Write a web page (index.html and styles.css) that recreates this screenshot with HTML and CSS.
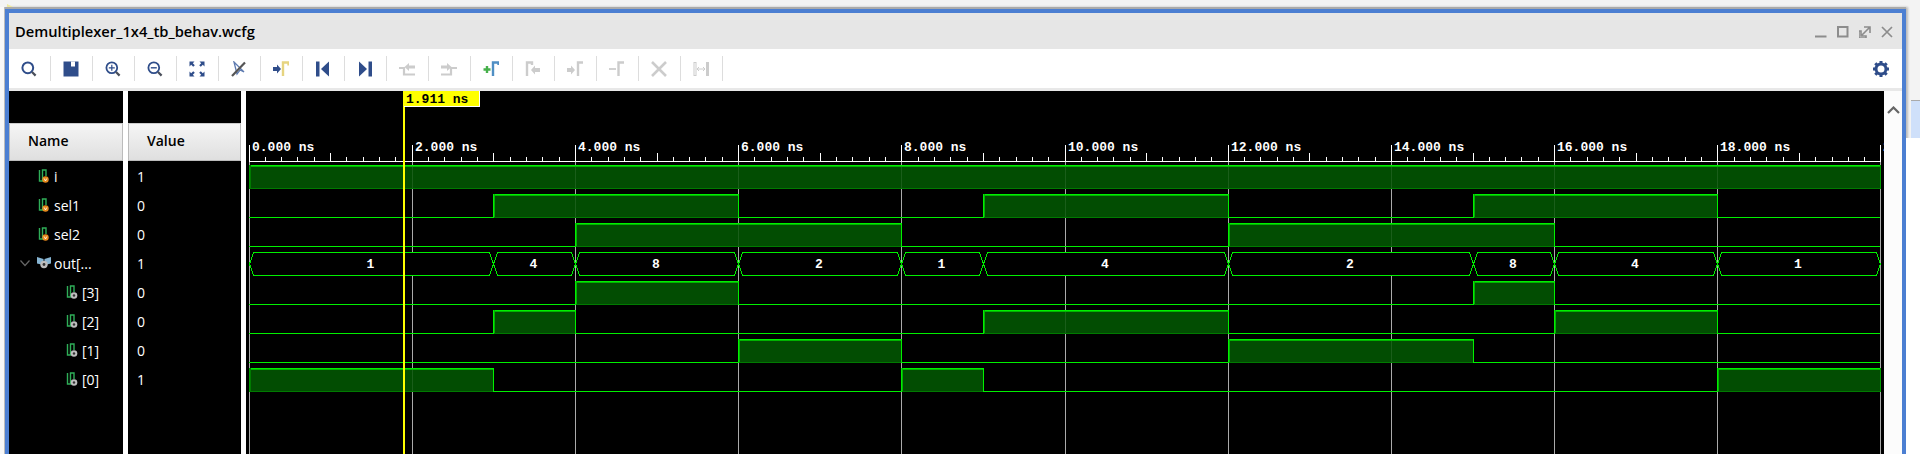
FILE: index.html
```html
<!DOCTYPE html>
<html lang="en">
<head>
	<meta charset="UTF-8">
	<title>Demultiplexer_1x4_tb_behav.wcfg</title>
	<link rel="stylesheet" href="styles.css">
</head>
<body>
	<div class="page">
		<div class="corner"></div>
		<div class="left-strip"></div>
		<div class="window">
			<div class="titlebar">
				<span class="title">Demultiplexer_1x4_tb_behav.wcfg</span>
				<div class="winbtns">
					<svg width="12" height="12" viewBox="0 0 12 12"><path d="M0 10.5h11.5" stroke="#8c8c8c" stroke-width="2"/></svg>
					<svg width="12" height="12" viewBox="0 0 12 12"><rect x="1" y="1" width="9.5" height="9.5" fill="none" stroke="#8c8c8c" stroke-width="2"/></svg>
					<svg width="12" height="12" viewBox="0 0 12 12"><path d="M5 1h6v6M11 1L6 6M0 5h2v5h5v2H0zM3 9l3-3" fill="none" stroke="#8c8c8c" stroke-width="1.6"/></svg>
					<svg width="12" height="12" viewBox="0 0 12 12"><path d="M1 1l10 10M11 1L1 11" stroke="#8c8c8c" stroke-width="1.7"/></svg>
				</div>
			</div>
			<div class="toolbar">
				<!-- search -->
				<div class="tool"><svg width="16" height="16" viewBox="0 0 16 16"><circle cx="6.8" cy="6.8" r="5.4" fill="none" stroke="#2f4d8a" stroke-width="2"/><path d="M11 11l3.6 3.6" stroke="#4a4f5a" stroke-width="2.2"/></svg></div>
				<!-- save -->
				<div class="tool"><svg width="16" height="16" viewBox="0 0 16 16"><path d="M0.5 0.5h15v15h-15z" fill="#2f4d8a"/><path d="M8 0.5h4v5h-4z" fill="#fff"/></svg></div>
				<!-- zoom in -->
				<div class="tool"><svg width="16" height="16" viewBox="0 0 16 16"><circle cx="6.8" cy="6.8" r="5.4" fill="none" stroke="#2f4d8a" stroke-width="1.8"/><path d="M6.8 3.8v6M3.8 6.8h6" stroke="#2f4d8a" stroke-width="1.2"/><path d="M11 11l3.6 3.6" stroke="#4a4f5a" stroke-width="2.2"/></svg></div>
				<!-- zoom out -->
				<div class="tool"><svg width="16" height="16" viewBox="0 0 16 16"><circle cx="6.8" cy="6.8" r="5.4" fill="none" stroke="#2f4d8a" stroke-width="1.8"/><path d="M3.8 6.8h6" stroke="#2f4d8a" stroke-width="1.4"/><path d="M11 11l3.6 3.6" stroke="#4a4f5a" stroke-width="2.2"/></svg></div>
				<!-- fit -->
				<div class="tool"><svg width="16" height="16" viewBox="0 0 16 16"><path d="M0.5 0.5h5l-1.7 1.7 2 2-1.6 1.6-2-2-1.7 1.7zM15.5 0.5h-5l1.7 1.7-2 2 1.6 1.6 2-2 1.7 1.7zM0.5 15.5h5l-1.7-1.7 2-2-1.6-1.6-2 2-1.7-1.7zM15.5 15.5h-5l1.7-1.7-2-2 1.6-1.6 2 2 1.7-1.7z" fill="#2f4d8a"/></svg></div>
				<!-- cursor off -->
				<div class="tool"><svg width="16" height="16" viewBox="0 0 16 16"><path d="M3 1l3 12 3-4 4 2z" fill="#fff" stroke="#5e7bb0" stroke-width="1.3"/><path d="M1 15L14 1.5" stroke="#555" stroke-width="2.2"/></svg></div>
				<!-- go to cursor -->
				<div class="tool"><svg width="16" height="16" viewBox="0 0 16 16"><path d="M0 6h4V3.5L8 8l-4 4.5V10H0z" fill="#2f4d8a"/><path d="M10 15V1.5h5.5v3" fill="none" stroke="#e6d480" stroke-width="2.4"/></svg></div>
				<!-- go to start -->
				<div class="tool"><svg width="16" height="16" viewBox="0 0 16 16"><path d="M1 0.5h3.5v15H1z" fill="#2f4d8a"/><path d="M14 0.5v15L6 8z" fill="#2f4d8a"/></svg></div>
				<!-- go to end -->
				<div class="tool"><svg width="16" height="16" viewBox="0 0 16 16"><path d="M11.5 0.5H15v15h-3.5z" fill="#2f4d8a"/><path d="M2 0.5v15L10 8z" fill="#2f4d8a"/></svg></div>
				<!-- previous transition -->
				<div class="tool"><svg width="16" height="16" viewBox="0 0 16 16"><path d="M0 7h5v6.5h11" fill="none" stroke="#ccc" stroke-width="2.2"/><path d="M16 4.5h-6V2L5.5 6 10 10V7.5h6z" fill="#ccc"/></svg></div>
				<!-- next transition -->
				<div class="tool"><svg width="16" height="16" viewBox="0 0 16 16"><path d="M0 4.5h6V2l4.5 4L6 10V7.5H0z" fill="#ccc"/><path d="M0 13.5h10V7h6" fill="none" stroke="#ccc" stroke-width="2.2"/></svg></div>
				<!-- add marker -->
				<div class="tool"><svg width="16" height="16" viewBox="0 0 16 16"><path d="M4 5v7M0.5 8.5h7" stroke="#46b04a" stroke-width="2.4"/><path d="M10 15V1.5h5.5v2.5" fill="none" stroke="#4f8fc4" stroke-width="2.4"/></svg></div>
				<!-- previous marker -->
				<div class="tool"><svg width="16" height="16" viewBox="0 0 16 16"><path d="M2 15V1.5h5v2.5" fill="none" stroke="#ccc" stroke-width="2.4"/><path d="M15 7H10V4.5L6 9l4 4.5V11h5z" fill="#ccc"/></svg></div>
				<!-- next marker -->
				<div class="tool"><svg width="16" height="16" viewBox="0 0 16 16"><path d="M0 7h4V4.5L8 9l-4 4.5V11H0z" fill="#ccc"/><path d="M11 15V1.5h5" fill="none" stroke="#ccc" stroke-width="2.4"/></svg></div>
				<!-- delete marker line -->
				<div class="tool"><svg width="16" height="16" viewBox="0 0 16 16"><path d="M0 8h7" stroke="#ccc" stroke-width="1.8"/><path d="M9.5 15V1.5H15" fill="none" stroke="#ccc" stroke-width="2.4"/></svg></div>
				<!-- delete all -->
				<div class="tool"><svg width="16" height="16" viewBox="0 0 16 16"><path d="M1 1l14 14M15 1L1 15" stroke="#ccc" stroke-width="2.6"/></svg></div>
				<!-- measure -->
				<div class="tool"><svg width="16" height="16" viewBox="0 0 16 16"><rect x="1" y="1.5" width="2" height="13" fill="#fff" stroke="#ccc"/><rect x="13" y="1" width="3" height="14" fill="#ccc"/><path d="M4 8h8M4 8l2-2M4 8l2 2M12 8l-2-2M12 8l-2 2" fill="none" stroke="#ccc"/></svg></div>
				<div class="tool-fill"></div>
				<!-- settings -->
				<svg class="gear" width="16" height="16" viewBox="0 0 16 16"><circle cx="8" cy="8" r="5" fill="none" stroke="#2f4d8a" stroke-width="3"/><path d="M8 0v3M8 13v3M0 8h3M13 8h3M2.3 2.3l2.1 2.1M11.6 11.6l2.1 2.1M13.7 2.3l-2.1 2.1M4.4 11.6l-2.1 2.1" stroke="#2f4d8a" stroke-width="3"/></svg>
			</div>
			<div class="toolbar-edge"></div>
			<div class="main">
				<div class="col col-name">
					<div class="col-top"></div>
					<div class="col-head">Name</div>
					<div class="row"><svg class="sig" width="14" height="15" viewBox="0 0 14 15"><path d="M1.5 1v11h3V1H8v6" fill="none" stroke="#2fae58" stroke-width="1.4"/><circle cx="7.5" cy="10.5" r="3.2" fill="#e8891c"/><path d="M6.2 9.5l1.3 2.5 1.3-2.5" fill="none" stroke="#fff" stroke-width=".8"/></svg><span>i</span></div>
					<div class="row"><svg class="sig" width="14" height="15" viewBox="0 0 14 15"><path d="M1.5 1v11h3V1H8v6" fill="none" stroke="#2fae58" stroke-width="1.4"/><circle cx="7.5" cy="10.5" r="3.2" fill="#e8891c"/><path d="M6.2 9.5l1.3 2.5 1.3-2.5" fill="none" stroke="#fff" stroke-width=".8"/></svg><span>sel1</span></div>
					<div class="row"><svg class="sig" width="14" height="15" viewBox="0 0 14 15"><path d="M1.5 1v11h3V1H8v6" fill="none" stroke="#2fae58" stroke-width="1.4"/><circle cx="7.5" cy="10.5" r="3.2" fill="#e8891c"/><path d="M6.2 9.5l1.3 2.5 1.3-2.5" fill="none" stroke="#fff" stroke-width=".8"/></svg><span>sel2</span></div>
					<div class="row row-group">
						<svg class="chev" width="10" height="7" viewBox="0 0 10 7"><path d="M0.5 0.5L5 5.5l4.5-5" fill="none" stroke="#666" stroke-width="1.2"/></svg>
						<svg class="grp" width="14" height="15" viewBox="0 0 14 15"><path d="M0 1l6.5 2v6L0 7.5zM14 1L7.5 3v6L14 7.5z" fill="#86b4d2"/><circle cx="7" cy="8.5" r="3.7" fill="#bdbdbd"/><circle cx="7" cy="8.5" r="1.4" fill="#333"/></svg>
						<span>out[...</span>
					</div>
					<div class="row row-child"><svg class="sig" width="14" height="15" viewBox="0 0 14 15"><path d="M1.5 1v11h3V1H8v6" fill="none" stroke="#2fae58" stroke-width="1.4"/><circle cx="8" cy="10.5" r="3.3" fill="#bdbdbd"/><circle cx="8" cy="10.5" r="1.2" fill="#333"/></svg><span>[3]</span></div>
					<div class="row row-child"><svg class="sig" width="14" height="15" viewBox="0 0 14 15"><path d="M1.5 1v11h3V1H8v6" fill="none" stroke="#2fae58" stroke-width="1.4"/><circle cx="8" cy="10.5" r="3.3" fill="#bdbdbd"/><circle cx="8" cy="10.5" r="1.2" fill="#333"/></svg><span>[2]</span></div>
					<div class="row row-child"><svg class="sig" width="14" height="15" viewBox="0 0 14 15"><path d="M1.5 1v11h3V1H8v6" fill="none" stroke="#2fae58" stroke-width="1.4"/><circle cx="8" cy="10.5" r="3.3" fill="#bdbdbd"/><circle cx="8" cy="10.5" r="1.2" fill="#333"/></svg><span>[1]</span></div>
					<div class="row row-child"><svg class="sig" width="14" height="15" viewBox="0 0 14 15"><path d="M1.5 1v11h3V1H8v6" fill="none" stroke="#2fae58" stroke-width="1.4"/><circle cx="8" cy="10.5" r="3.3" fill="#bdbdbd"/><circle cx="8" cy="10.5" r="1.2" fill="#333"/></svg><span>[0]</span></div>
				</div>
				<div class="col col-value">
					<div class="col-top"></div>
					<div class="col-head">Value</div>
					<div class="row"><span>1</span></div>
					<div class="row"><span>0</span></div>
					<div class="row"><span>0</span></div>
					<div class="row"><span>1</span></div>
					<div class="row"><span>0</span></div>
					<div class="row"><span>0</span></div>
					<div class="row"><span>0</span></div>
					<div class="row"><span>1</span></div>
				</div>
				<div id="wave" class="wave"></div>
				<div class="scroll">
					<svg width="13" height="8" viewBox="0 0 13 8"><path d="M1 7l5.5-5.5L12 7" fill="none" stroke="#666" stroke-width="2.2"/></svg>
				</div>
			</div>
		</div>
		<div class="side">
			<div class="side-tab"></div>
			<div class="side-rest"></div>
		</div>
	</div>
	<script src="wave.js"></script>
</body>
</html>
```

FILE: styles.css
```css
*{
	margin:0;
	padding:0;
	box-sizing:border-box;
}
body{
	height:454px;
	overflow:hidden;
	background:#f3f3f3;
	font-family:"Open Sans","Noto Sans",sans-serif;
}
.page{
	position:relative;
	display:flex;
	height:454px;
	padding-top:7px;
}
.corner{
	position:absolute;
	left:7px;
	top:4px;
	width:0;
	height:0;
	border-left:6px solid #efe9a0;
	border-top:3px solid transparent;
}
.left-strip{
	width:5px;
	background:#f8f8f8;
}
.window{
	width:1901px;
	border-top:2px solid #aaa;
	display:flex;
	flex-direction:column;
	box-shadow:2px 0 2px #bbb,-1px 0 0 #bbb;
	background:#f3f3f3;
}
.titlebar{
	height:40px;
	border-top:4px solid #4c7fd2;
	border-left:4px solid #4c7fd2;
	border-right:4px solid #4c7fd2;
	background:#e6e6e6;
	display:flex;
	align-items:center;
	justify-content:space-between;
	padding:0 9px 0 6px;
}
.title{
	font-size:14.7px;
	font-weight:600;
	color:#000;
}
.winbtns{
	display:flex;
	gap:10px;
	margin-top:2px;
}
.toolbar{
	height:39px;
	border-left:4px solid #4c7fd2;
	border-right:4px solid #4c7fd2;
	background:#fff;
	display:flex;
	align-items:center;
}
.tool{
	width:42px;
	height:25px;
	border-right:1px solid #ddd;
	display:flex;
	align-items:center;
	justify-content:center;
	padding-right:1px;
	flex:none;
}
.tool-fill{
	flex:1;
}
.gear{
	margin-right:13px;
}
.toolbar-edge{
	height:3px;
	background:#e8e8e8;
	border-left:4px solid #4c7fd2;
	border-right:4px solid #4c7fd2;
}
.main{
	flex:1;
	display:flex;
	background:#fff;
	border-left:4px solid #4c7fd2;
	border-right:4px solid #4c7fd2;
}
.col{
	background:#000;
	color:#fff;
	font-size:14px;
}
.col-name{
	width:114px;
	margin-right:5px;
}
.col-value{
	width:113px;
	margin-right:5px;
}
.col-top{
	height:32px;
}
.col-head{
	height:38px;
	background:linear-gradient(#f5f5f5,#dfdfdf);
	border:1px solid #bbb;
	border-top-color:#ccc;
	color:#000;
	font-weight:600;
	font-size:14px;
	line-height:33px;
	padding-left:18px;
}
.row{
	height:29px;
	display:flex;
	align-items:center;
	padding:1px 0 0 29px;
}
.col-value .row{
	padding-left:9px;
}
.sig{
	margin-right:2px;
	flex:none;
}
.row-child{
	padding-left:57px;
}
.row-group{
	padding-left:11px;
}
.chev{
	margin-right:7px;
	flex:none;
}
.grp{
	margin-right:3px;
	flex:none;
}
.wave{
	width:1638px;
	background:#000;
}
.wave svg{
	display:block;
}
.wave text{
	font-family:"Liberation Mono",monospace;
	font-size:13px;
	font-weight:700;
	fill:#fff;
}
.wave .cursor-text{
	fill:#000;
}
.scroll{
	flex:1;
	background:#fcfcfc;
	text-align:center;
	padding-top:6px;
}
.side{
	flex:1;
	display:flex;
	flex-direction:column;
	padding-top:93px;
}
.side-tab{
	height:38px;
	margin-left:5px;
	border-top:1px solid #aaa;
	background:#cfe0fa;
}
.side-rest{
	flex:1;
	background:#fff;
}
```

FILE: wave.js
```js
(function() {
	var X0=249;
	var NS=81.6;
	var oWave=document.getElementById('wave');
	var html='';

	// 每行的高电平区间，单位 ns
	var aSignals=[
		{row:0,high:[[0,20]]},
		{row:1,high:[[3,6],[9,12],[15,18]]},
		{row:2,high:[[4,8],[12,16]]},
		{row:4,high:[[4,6],[15,16]]},
		{row:5,high:[[3,4],[9,12],[16,18]]},
		{row:6,high:[[6,8],[12,15]]},
		{row:7,high:[[0,3],[8,9],[18,20]]}
	];
	var aBus=[[0,3,'1'],[3,4,'4'],[4,6,'8'],[6,8,'2'],[8,9,'1'],[9,12,'4'],[12,15,'2'],[15,16,'8'],[16,18,'4'],[18,20,'1']];

	function px(t) {
		return Math.min(Math.floor(X0+NS*t),1880);
	}
	function rect(x,y,w,h,color) {
		html+='<rect x="'+x+'" y="'+y+'" width="'+w+'" height="'+h+'" fill="'+color+'"/>';
	}
	function text(x,y,str,cls,anchor) {
		html+='<text x="'+x+'" y="'+y+'"'+(cls?' class="'+cls+'"':'')+(anchor?' text-anchor="'+anchor+'"':'')+'>'+str+'</text>';
	}

	// 标尺
	rect(249,161,1632,1,'#fff');
	for(var i=0;i<=100;i++){
		var t=i*0.2;
		var x=px(t);
		var top=157;
		if(i%5===0) top=153;
		if(i%10===0) top=145;
		rect(x,top,1,161-top,'#fff');
		if(i%10===0) text(x+3,151,t.toFixed(3)+' ns');
	}

	// 网格线
	for(var n=0;n<=20;n+=2){
		rect(px(n),162,1,292,'#aaa');
	}

	// 单 bit 信号
	aSignals.forEach(function(sig) {
		var yHigh=165+sig.row*29;
		var yLow=188+sig.row*29;
		var last=0;
		sig.high.forEach(function(seg) {
			var x1=px(seg[0]);
			var x2=px(seg[1]);
			if(seg[0]>last) rect(px(last),yLow,x1-px(last),1,'#00f000');
			rect(x1,yHigh,x2-x1,23,'#024d02');
			// 让网格线在填充里隐约可见
			for(var n=0;n<=20;n+=2){
				if(px(n)>x1&&px(n)<x2) rect(px(n),yHigh,1,23,'#1a5e1a');
			}
			rect(x1,yHigh,x2-x1,1,'#00f000');
			rect(x1,yHigh+1,x2-x1,1,'#00b400');
			rect(x1,yLow,x2-x1,1,'#007a00');
			rect(x1,yHigh,1,24,seg[0]===0?'#009a00':'#00f000');
			rect(x1+1,yHigh,1,23,seg[0]===0?'#007a00':'#00b400');
			rect(x2,yHigh,1,24,seg[1]===20?'#009a00':'#00f000');
			last=seg[1];
		});
		if(last<20) rect(px(last),yLow,px(20)-px(last),1,'#00f000');
	});

	// 总线 out[3:0]
	aBus.forEach(function(seg) {
		var x1=px(seg[0])+0.5;
		var x2=px(seg[1])+0.5;
		var pts=[[x1,264],[x1+4,252.5],[x2-4,252.5],[x2,264],[x2-4,275.5],[x1+4,275.5]];
		html+='<polygon points="'+pts.join(' ')+'" fill="#000" stroke="#00f000" stroke-width="1"/>';
		text((x1+x2)/2-1,268,seg[2],'','middle');
	});

	// 游标
	rect(403,91,2,363,'#ff0');
	rect(404,91,76,16,'#fff');
	rect(404,91,75,15,'#ff0');
	text(406,103,'1.911 ns','cursor-text');

	oWave.innerHTML='<svg width="1638" height="363" viewBox="246 91 1638 363" shape-rendering="crispEdges">'+html+'</svg>';
})();
```
